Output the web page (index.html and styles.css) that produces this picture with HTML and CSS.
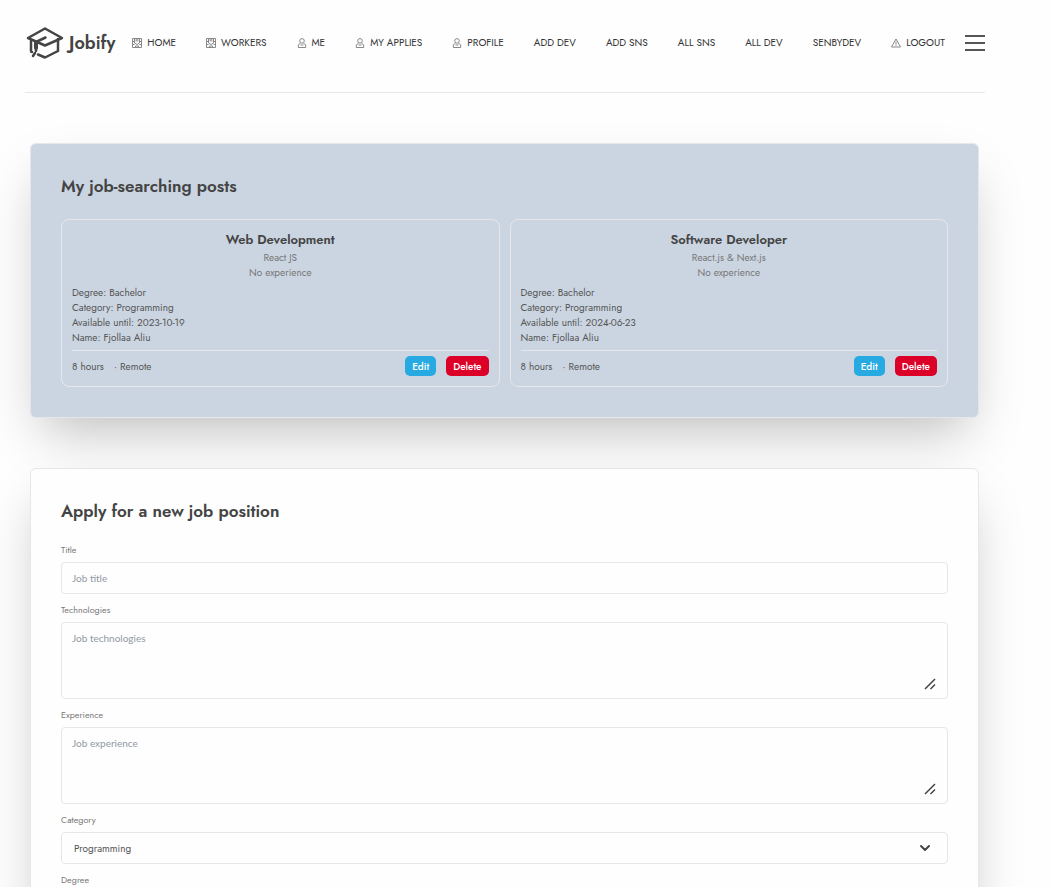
FILE: index.html
```html
<!DOCTYPE html>
<html lang="en">
<head>
<meta charset="utf-8">
<meta name="viewport" content="width=device-width, initial-scale=1">
<title>Jobify</title>
<link rel="stylesheet" href="styles.css">
</head>
<body>
<svg class="sprite" aria-hidden="true">
  <symbol id="building" viewBox="0 0 10 10"><path d="M.5.5h9v9h-9zM2.500 1v4l2.500 1.500L7.500 5V1M4.200 1v2.500M5.800 1v2.500M.5 3.500h2M7.500 3.500h2M.5 6.500h2M7.500 6.500h2M3.500 9.500V8h3v1.500"/></symbol>
  <symbol id="person" viewBox="0 0 10 10"><circle cx="5" cy="2.900" r="2.300"/><path d="M3.500 5.200 1.300 6.800v2.700h7.400V6.800L6.500 5.200M3.500 7h3"/></symbol>
  <symbol id="alert" viewBox="0 0 10 10"><path d="M5 1 9.500 9H.5zM5 3.500v3M5 7.300v.8"/></symbol>
</svg>
<div class="page">
  <header class="header">
    <a class="brand" href="#">
      <svg class="brand-icon" viewBox="0 0 40 36" aria-hidden="true"><path d="M3 13 20 3.500 37 13 20 20.500z"/><path d="M6 16v10q0 1 1 1M13 29.500l7 3 13-6.500V14"/><path d="M20.500 12.500 11 17v2"/><path class="tassel" d="M11 17.500v5.500"/><path d="M11 22v4M10 28l-2 3"/></svg>
      <span>Jobify</span>
    </a>
    <nav class="nav">
      <a href="#"><svg><use href="#building"/></svg>HOME</a>
      <a href="#"><svg><use href="#building"/></svg>WORKERS</a>
      <a href="#"><svg><use href="#person"/></svg>ME</a>
      <a href="#"><svg><use href="#person"/></svg>MY APPLIES</a>
      <a href="#"><svg><use href="#person"/></svg>PROFILE</a>
      <a href="#">ADD DEV</a>
      <a href="#">ADD SNS</a>
      <a href="#">ALL SNS</a>
      <a href="#">ALL DEV</a>
      <a href="#">SENBYDEV</a>
      <a href="#"><svg><use href="#alert"/></svg>LOGOUT</a>
    </nav>
    <button class="menu" type="button" aria-label="Menu"><i></i><i></i><i></i></button>
  </header>
  <main class="main">
    <section class="panel panel-posts">
      <h2>My job-searching posts</h2>
      <div class="posts">
        <article class="post">
          <h3>Web Development</h3>
          <div class="summary"><p>React JS</p><p>No experience</p></div>
          <div class="details">
            <p>Degree: Bachelor</p>
            <p>Category: Programming</p>
            <p>Available until: 2023-10-19</p>
            <p>Name: Fjollaa Aliu</p>
          </div>
          <footer class="post-foot">
            <span>8 hours</span><span>· Remote</span>
            <button class="btn btn-edit" type="button">Edit</button>
            <button class="btn btn-delete" type="button">Delete</button>
          </footer>
        </article>
        <article class="post">
          <h3>Software Developer</h3>
          <div class="summary"><p>React.js &amp; Next.js</p><p>No experience</p></div>
          <div class="details">
            <p>Degree: Bachelor</p>
            <p>Category: Programming</p>
            <p>Available until: 2024-06-23</p>
            <p>Name: Fjollaa Aliu</p>
          </div>
          <footer class="post-foot">
            <span>8 hours</span><span>· Remote</span>
            <button class="btn btn-edit" type="button">Edit</button>
            <button class="btn btn-delete" type="button">Delete</button>
          </footer>
        </article>
      </div>
    </section>
    <section class="panel">
      <h2>Apply for a new job position</h2>
      <form class="form">
        <div class="field">
          <label for="title">Title</label>
          <input class="control" id="title" type="text" placeholder="Job title">
        </div>
        <div class="field">
          <label for="tech">Technologies</label>
          <div class="control-wrap">
            <textarea class="control" id="tech" placeholder="Job technologies"></textarea>
            <svg class="grip" viewBox="0 0 12 12" aria-hidden="true"><path d="M1 11 11 1M6.500 11 11 6.500"/></svg>
          </div>
        </div>
        <div class="field">
          <label for="exp">Experience</label>
          <div class="control-wrap">
            <textarea class="control" id="exp" placeholder="Job experience"></textarea>
            <svg class="grip" viewBox="0 0 12 12" aria-hidden="true"><path d="M1 11 11 1M6.500 11 11 6.500"/></svg>
          </div>
        </div>
        <div class="field">
          <label for="category">Category</label>
          <div class="control-wrap">
            <select class="control" id="category"><option>Programming</option></select>
            <svg class="chevron" viewBox="0 0 12 8" aria-hidden="true"><path d="m2 2 4 4 4-4"/></svg>
          </div>
        </div>
        <div class="field">
          <label for="degree">Degree</label>
          <select class="control" id="degree"></select>
        </div>
      </form>
    </section>
  </main>
</div>
</body>
</html>
```
FILE: styles.css
```css
* { box-sizing: border-box; }

body {
  margin: 0;
  background: #fefefe;
  color: #555;
  font: 10px/15px Jost, Lato, sans-serif;
}

h2, h3, p { margin: 0; }
a { color: inherit; text-decoration: none; }
button, input, textarea, select { font: inherit; color: inherit; }
.sprite { display: none; }

.page { padding: 25px 66px 50px 25px; }

.header {
  display: flex;
  align-items: center;
  border-bottom: 1px solid #e5e7eb;
  padding-bottom: 31px;
}

.brand {
  display: flex;
  align-items: center;
  gap: 4px;
  color: #444;
  font-size: 18px;
  font-weight: 600;
  line-height: 36px;
}
.brand-icon {
  width: 40px;
  height: 36px;
  fill: none;
  stroke: #444;
  stroke-width: 2.500;
  stroke-linecap: round;
  stroke-linejoin: round;
}
.brand-icon .tassel { stroke-width: 4; }

.nav {
  flex: 1;
  display: flex;
  justify-content: space-between;
  margin: 0 20px 1px 17px;
  color: #333;
  white-space: nowrap;
}
.nav a { display: flex; align-items: center; gap: 5px; }
.nav svg {
  width: 10px;
  height: 10px;
  fill: none;
  stroke: #888;
  stroke-width: 1;
}

.menu {
  display: flex;
  flex-direction: column;
  justify-content: space-between;
  width: 20px;
  height: 16px;
  padding: 0;
  border: 0;
  background: none;
}
.menu i { height: 2px; background: #555; }

.main {
  display: grid;
  gap: 50px;
  padding: 50px 6px 0 5px;
}

.panel {
  min-width: 0;
  padding: 30px;
  border: 1px solid #e5e7eb;
  border-radius: 6px;
  background: #fefefe;
  box-shadow: 0 25px 50px -12px rgba(0, 0, 0, .25);
}
.panel-posts { background: #cbd5e1; }
.panel h2 {
  margin-bottom: 20px;
  color: #444;
  font-size: 17px;
  font-weight: 600;
  line-height: 25px;
}

.posts {
  display: grid;
  grid-template-columns: 1fr 1fr;
  gap: 10px;
}
.post {
  display: grid;
  gap: 5px;
  padding: 10px;
  border: 1px solid #e5e7eb;
  border-radius: 8px;
}
.post h3 {
  margin-bottom: -5px;
  color: #444;
  font-size: 13px;
  font-weight: 600;
  line-height: 20px;
  text-align: center;
}
.summary { color: #777; text-align: center; }
.post-foot {
  display: flex;
  align-items: center;
  gap: 10px;
  padding-top: 5px;
  border-top: 1px solid #e5e7eb;
}
.btn {
  height: 20px;
  padding: 0 7px;
  border: 0;
  border-radius: 5px;
  color: #fff;
  font-weight: 500;
}
.btn-edit { margin-left: auto; background: #27aae1; }
.btn-delete { background: #dc0028; }

.form { display: grid; gap: 10px; }
.field { display: grid; gap: 6px; }
.field label { color: #777; font-size: 9px; line-height: 12px; }
.control-wrap { position: relative; display: grid; }
.control {
  width: 100%;
  height: 32px;
  padding: 0 10px;
  border: 1px solid #e5e7eb;
  border-radius: 4px;
  background: #fefefe;
  outline: 0;
  appearance: none;
}
.control::placeholder { color: #9198a4; font-family: Lato, sans-serif; }
textarea.control {
  height: 77px;
  padding: 8px 10px;
  resize: none;
}
select.control { padding: 0 12px; }

.grip, .chevron {
  position: absolute;
  fill: none;
  stroke: #444;
  pointer-events: none;
}
.grip { right: 12px; bottom: 9px; width: 12px; height: 12px; stroke-width: 1.500; }
.chevron { right: 17px; top: 12px; width: 12px; height: 8px; stroke-width: 2; stroke-linecap: round; stroke-linejoin: round; }
```
